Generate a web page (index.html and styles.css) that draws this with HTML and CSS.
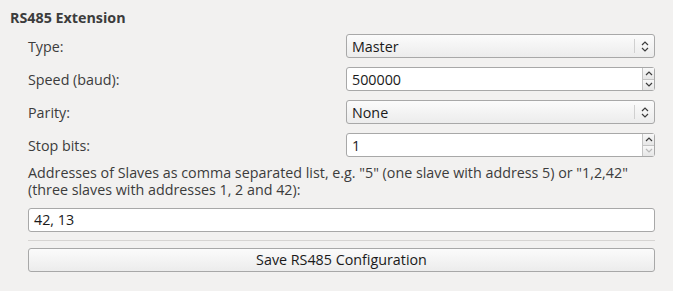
FILE: index.html
```html
<!DOCTYPE html>
<html lang="en">
<head>
    <meta charset="UTF-8">
    <title>RS485 Extension</title>
    <link rel="stylesheet" href="styles.css">
</head>
<body>
    <div class="panel">
        <h1 class="title">RS485 Extension</h1>
        <div class="form">
            <div class="row">
                <label>Type:</label>
                <div class="combo">
                    <span class="value">Master</span>
                    <span class="combo-arrow">
                        <svg width="8" height="11" viewBox="0 0 8 11"><path d="M1 4 L4 1 L7 4 M1 7 L4 10 L7 7" fill="none" stroke="#3c3c3c" stroke-width="1.2"/></svg>
                    </span>
                </div>
            </div>
            <div class="row">
                <label>Speed (baud):</label>
                <div class="spin">
                    <span class="value">500000</span>
                    <span class="spin-buttons">
                        <span class="spin-btn"><svg width="8" height="5" viewBox="0 0 8 5"><path d="M1 4 L4 1 L7 4" fill="none" stroke="#3c3c3c" stroke-width="1.2"/></svg></span>
                        <span class="spin-btn"><svg width="8" height="5" viewBox="0 0 8 5"><path d="M1 1 L4 4 L7 1" fill="none" stroke="#3c3c3c" stroke-width="1.2"/></svg></span>
                    </span>
                </div>
            </div>
            <div class="row">
                <label>Parity:</label>
                <div class="combo">
                    <span class="value">None</span>
                    <span class="combo-arrow">
                        <svg width="8" height="11" viewBox="0 0 8 11"><path d="M1 4 L4 1 L7 4 M1 7 L4 10 L7 7" fill="none" stroke="#3c3c3c" stroke-width="1.2"/></svg>
                    </span>
                </div>
            </div>
            <div class="row">
                <label>Stop bits:</label>
                <div class="spin">
                    <span class="value">1</span>
                    <span class="spin-buttons">
                        <span class="spin-btn"><svg width="8" height="5" viewBox="0 0 8 5"><path d="M1 4 L4 1 L7 4" fill="none" stroke="#3c3c3c" stroke-width="1.2"/></svg></span>
                        <span class="spin-btn disabled"><svg width="8" height="5" viewBox="0 0 8 5"><path d="M1 1 L4 4 L7 1" fill="none" stroke="#b8b8b8" stroke-width="1.2"/></svg></span>
                    </span>
                </div>
            </div>
            <p class="hint">Addresses of Slaves as comma separated list, e.g. "5" (one slave with address 5) or "1,2,42" (three slaves with addresses 1, 2 and 42):</p>
            <div class="text-input">42, 13</div>
            <hr class="separator">
            <div class="button">Save RS485 Configuration</div>
        </div>
    </div>
</body>
</html>
```

FILE: styles.css
```css
body {
    margin: 0;
    background-color: #f2f1f0;
    font-family: "Open Sans", "DejaVu Sans", sans-serif;
    font-size: 14.3px;
    color: #3c3c3c;
}

.panel {
    padding: 9px 18px 0 10px;
}

.title {
    margin: 0 0 7px 0;
    font-size: 14.3px;
    font-weight: bold;
    line-height: 18px;
}

.form {
    padding-left: 18px;
}

.row {
    display: flex;
    align-items: center;
    justify-content: space-between;
    height: 24px;
    margin-bottom: 9px;
}

.combo,
.spin {
    width: 307px;
    height: 22px;
    border: 1px solid #a8a8a8;
    border-radius: 3px;
    display: flex;
    align-items: center;
    box-sizing: content-box;
}

.combo {
    background: linear-gradient(#fbfbfb, #ececec);
}

.spin {
    background-color: #fff;
}

.value {
    flex: 1;
    padding-left: 5px;
    color: #1a1a1a;
}

.combo-arrow {
    width: 19px;
    height: 14px;
    border-left: 1px solid #d0d0d0;
    display: flex;
    justify-content: center;
    align-items: center;
}

.spin-buttons {
    width: 11px;
    height: 22px;
    display: flex;
    flex-direction: column;
    border-left: 1px solid #c4c4c4;
}

.spin-btn {
    flex: 1;
    display: flex;
    justify-content: center;
    align-items: center;
    background: linear-gradient(#f8f8f8, #e6e6e6);
}

.spin-btn + .spin-btn {
    border-top: 1px solid #c4c4c4;
}

.hint {
    margin: -2px 0 10px 0;
    line-height: 17px;
    color: #3c3c3c;
}

.text-input {
    height: 22px;
    line-height: 22px;
    border: 1px solid #a8a8a8;
    border-radius: 3px;
    background-color: #fff;
    padding-left: 5px;
    color: #1a1a1a;
}

.separator {
    margin: 8px 0 7px 0;
    border: 0;
    border-top: 1px solid #d6d4d2;
}

.button {
    height: 22px;
    line-height: 22px;
    border: 1px solid #a8a8a8;
    border-radius: 3px;
    background: linear-gradient(#fbfbfb, #ececec);
    text-align: center;
    color: #1a1a1a;
}
```
